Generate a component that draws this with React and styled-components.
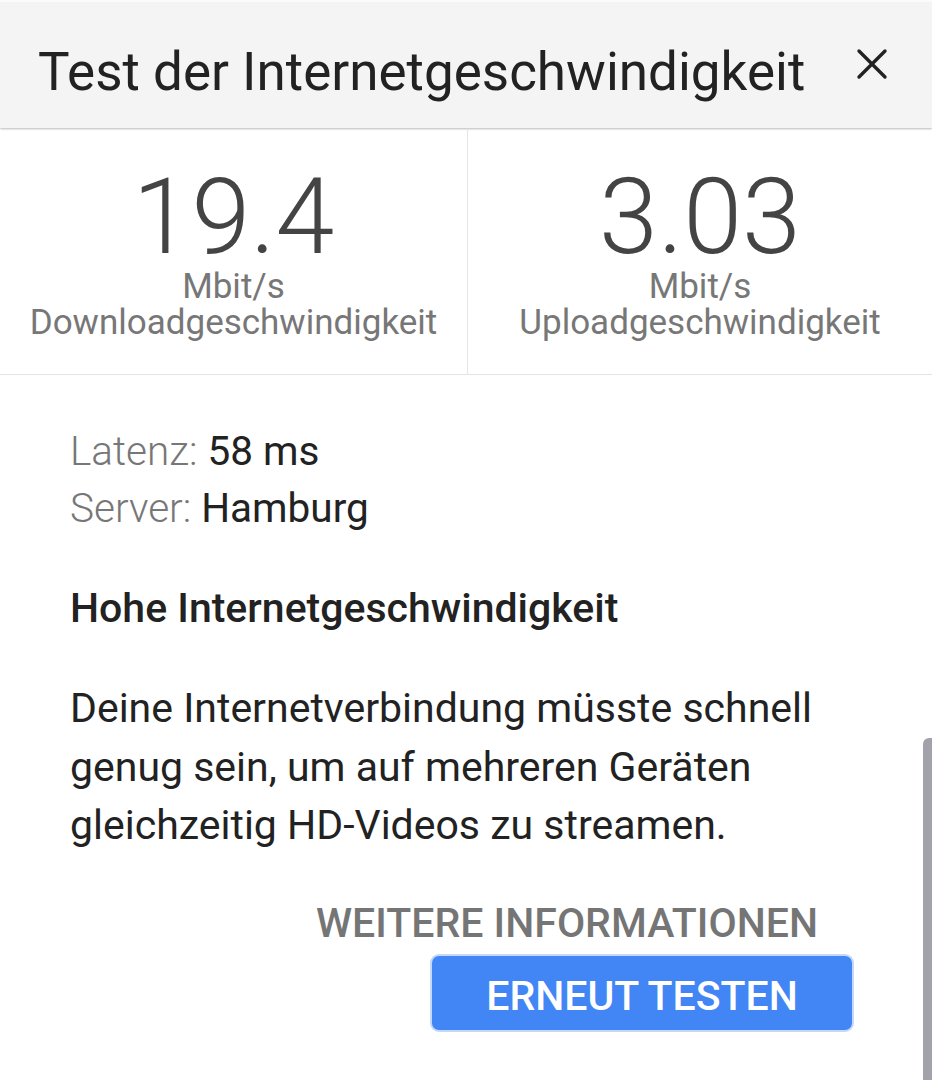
import React from "react";
import styled, { createGlobalStyle } from "styled-components";

const Global = createGlobalStyle`
  html, body { margin: 0; padding: 0; background: #fff; }
  body { font-family: Roboto, "Noto Sans", "Liberation Sans", sans-serif; }
`;

const Screen = styled.div`
  position: relative;
  width: 932px;
  height: 1080px;
  overflow: hidden;
  background: #fff;
  display: flex;
  flex-direction: column;
`;

const Header = styled.header`
  height: 128px;
  flex: none;
  background: #f4f4f4;
  display: flex;
  align-items: flex-start;
  justify-content: space-between;
  padding: 39px 40px 0 38px;
  box-sizing: border-box;
  border-top: 2px solid #fbfbfb;
  box-shadow: 0 1px 2px rgba(0, 0, 0, 0.28);
  position: relative;
  z-index: 1;
`;

const Title = styled.h1`
  margin: 0;
  font-size: 53px;
  line-height: 62px;
  font-weight: 400;
  color: #222;
`;

const CloseButton = styled.button`
  border: 0;
  background: none;
  padding: 0;
  margin-top: 3px;
  width: 40px;
  height: 40px;
  display: flex;
  align-items: center;
  justify-content: center;
  color: #222;
`;

const Stats = styled.section`
  flex: none;
  height: 245px;
  margin-top: 2px;
  display: grid;
  grid-template-columns: 467px 1fr;
  border-bottom: 1px solid #e4e4e4;
  box-sizing: border-box;
`;

const Stat = styled.div`
  display: flex;
  flex-direction: column;
  align-items: center;
  padding-top: 37px;
  border-left: ${(p) => (p.$divider ? "1px solid #e6e6e6" : "none")};
`;

const Value = styled.div`
  font-size: 106px;
  font-weight: 300;
  color: #444;
  line-height: 100px;
  margin-bottom: 2px;
`;

const Unit = styled.div`
  font-size: 35px;
  font-weight: 400;
  color: #777;
  line-height: 36px;
  text-align: center;
`;

const Body = styled.div`
  padding: 48px 70px 0 70px;
  display: flex;
  flex-direction: column;
`;

const InfoLine = styled.div`
  font-size: 40.5px;
  line-height: 57px;
  color: #222;
`;

const Label = styled.span`
  font-weight: 300;
  color: #777;
`;

const Heading = styled.h2`
  margin: 42px 0 0;
  font-size: 41px;
  font-weight: 500;
  color: #222;
  line-height: 58px;
`;

const Paragraph = styled.p`
  margin: 42px 0 0;
  font-size: 41px;
  line-height: 58.5px;
  color: #222;
`;

const Actions = styled.div`
  display: flex;
  flex-direction: column;
  align-items: flex-end;
  padding-right: 78px;
  margin-top: 42px;
`;

const TextButton = styled.button`
  border: 0;
  background: none;
  padding: 0;
  margin-right: 36px;
  font-family: inherit;
  font-size: 41px;
  font-weight: 500;
  color: #757575;
  line-height: 52px;
`;

const PrimaryButton = styled.button`
  margin-top: 5px;
  width: 424px;
  height: 78px;
  padding: 6px 0 0;
  border-radius: 9px;
  border: 2px solid #c3d8fb;
  background: #4285f4;
  color: #fff;
  font-family: inherit;
  font-size: 41px;
  font-weight: 500;
  box-sizing: border-box;
`;

const Scrollbar = styled.div`
  position: absolute;
  right: 0;
  top: 738px;
  bottom: 0;
  width: 9px;
  background: #a2a2aa;
  border-radius: 6px 0 0 0;
`;

export default function App() {
  return (
    <>
      <Global />
      <Screen>
        <Header>
          <Title>Test der Internetgeschwindigkeit</Title>
          <CloseButton aria-label="Schließen">
            <svg width="32" height="32" viewBox="0 0 32 32" fill="none" stroke="#222" strokeWidth="3.4" strokeLinecap="round">
              <path d="M3 3 L29 29 M29 3 L3 29" />
            </svg>
          </CloseButton>
        </Header>
        <Stats>
          <Stat>
            <Value>19.4</Value>
            <Unit>
              Mbit/s
              <br />
              Downloadgeschwindigkeit
            </Unit>
          </Stat>
          <Stat $divider>
            <Value>3.03</Value>
            <Unit>
              Mbit/s
              <br />
              Uploadgeschwindigkeit
            </Unit>
          </Stat>
        </Stats>
        <Body>
          <InfoLine>
            <Label>Latenz: </Label>58 ms
          </InfoLine>
          <InfoLine>
            <Label>Server: </Label>Hamburg
          </InfoLine>
          <Heading>Hohe Internetgeschwindigkeit</Heading>
          <Paragraph>
            Deine Internetverbindung müsste schnell
            <br />
            genug sein, um auf mehreren Geräten
            <br />
            gleichzeitig HD-Videos zu streamen.
          </Paragraph>
        </Body>
        <Actions>
          <TextButton>WEITERE INFORMATIONEN</TextButton>
          <PrimaryButton>ERNEUT TESTEN</PrimaryButton>
        </Actions>
        <Scrollbar />
      </Screen>
    </>
  );
}
